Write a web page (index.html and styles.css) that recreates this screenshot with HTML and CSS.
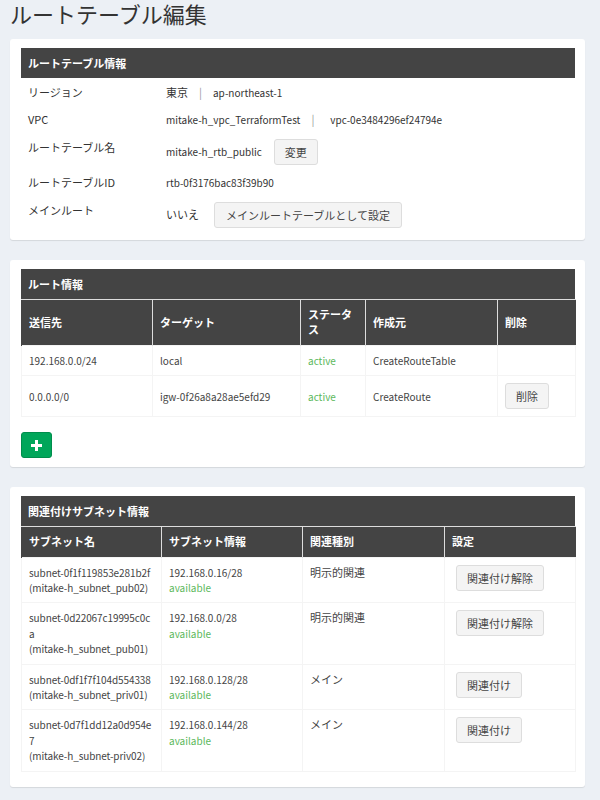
FILE: index.html
```html
<!DOCTYPE html>
<html lang="ja">
<head>
<meta charset="utf-8">
<title>ルートテーブル編集</title>
<link rel="stylesheet" href="styles.css">
</head>
<body>
<div class="page">
  <h1 class="page-title">ルートテーブル編集</h1>

  <section class="box box-info">
    <div class="box-head">ルートテーブル情報</div>
    <div class="info-list">
      <div class="info-row">
        <div class="info-label">リージョン</div>
        <div class="info-value"><span class="ja">東京</span><span class="sep">|</span>ap-northeast-1</div>
      </div>
      <div class="info-row">
        <div class="info-label">VPC</div>
        <div class="info-value">mitake-h_vpc_TerraformTest<span class="sep sep-wide">|</span>vpc-0e3484296ef24794e</div>
      </div>
      <div class="info-row has-btn">
        <div class="info-label">ルートテーブル名</div>
        <div class="info-value">mitake-h_rtb_public<button class="btn btn-gap">変更</button></div>
      </div>
      <div class="info-row">
        <div class="info-label">ルートテーブルID</div>
        <div class="info-value">rtb-0f3176bac83f39b90</div>
      </div>
      <div class="info-row has-btn">
        <div class="info-label">メインルート</div>
        <div class="info-value"><span class="ja">いいえ</span><button class="btn btn-gap-wide">メインルートテーブルとして設定</button></div>
      </div>
    </div>
  </section>

  <section class="box box-route">
    <div class="box-head">ルート情報</div>
    <table class="tbl">
      <thead>
        <tr>
          <th class="c-dest">送信先</th>
          <th class="c-target">ターゲット</th>
          <th class="c-status">ステータス</th>
          <th class="c-origin">作成元</th>
          <th class="c-del">削除</th>
        </tr>
      </thead>
      <tbody>
        <tr>
          <td>192.168.0.0/24</td>
          <td>local</td>
          <td class="ok">active</td>
          <td>CreateRouteTable</td>
          <td></td>
        </tr>
        <tr>
          <td>0.0.0.0/0</td>
          <td>igw-0f26a8a28ae5efd29</td>
          <td class="ok">active</td>
          <td>CreateRoute</td>
          <td><button class="btn">削除</button></td>
        </tr>
      </tbody>
    </table>
    <button class="btn-add" aria-label="追加"><svg width="11" height="11" viewBox="0 0 11 11"><path d="M4 0h3v4h4v3H7v4H4V7H0V4h4z" fill="#fff"/></svg></button>
  </section>

  <section class="box box-subnet">
    <div class="box-head">関連付けサブネット情報</div>
    <table class="tbl tbl-sub">
      <thead>
        <tr>
          <th class="c-sname">サブネット名</th>
          <th class="c-sinfo">サブネット情報</th>
          <th class="c-stype">関連種別</th>
          <th class="c-sset">設定</th>
        </tr>
      </thead>
      <tbody>
        <tr>
          <td class="brk">subnet-0f1f119853e281b2f<br>(mitake-h_subnet_pub02)</td>
          <td>192.168.0.16/28<br><span class="ok">available</span></td>
          <td><span class="ja">明示的関連</span></td>
          <td><button class="btn btn-in">関連付け解除</button></td>
        </tr>
        <tr>
          <td class="brk">subnet-0d22067c19995c0ca<br>(mitake-h_subnet_pub01)</td>
          <td>192.168.0.0/28<br><span class="ok">available</span></td>
          <td><span class="ja">明示的関連</span></td>
          <td><button class="btn btn-in">関連付け解除</button></td>
        </tr>
        <tr>
          <td class="brk">subnet-0df1f7f104d554338<br>(mitake-h_subnet_priv01)</td>
          <td>192.168.0.128/28<br><span class="ok">available</span></td>
          <td><span class="ja">メイン</span></td>
          <td><button class="btn btn-in">関連付け</button></td>
        </tr>
        <tr>
          <td class="brk">subnet-0d7f1dd12a0d954e7<br>(mitake-h_subnet-priv02)</td>
          <td>192.168.0.144/28<br><span class="ok">available</span></td>
          <td><span class="ja">メイン</span></td>
          <td><button class="btn btn-in">関連付け</button></td>
        </tr>
      </tbody>
    </table>
  </section>
</div>
</body>
</html>
```
FILE: styles.css
```css
* { box-sizing: border-box; }
html, body { margin: 0; padding: 0; }
body {
  background: #ecf0f5;
  font-family: "Noto Sans CJK JP", "Noto Sans", sans-serif;
  font-size: 11px;
  line-height: 15.4px;
  color: #333;
}
.page { width: 585px; padding-left: 10px; padding-bottom: 20px; }
.page-title {
  margin: 0;
  padding-top: 1px;
  font-size: 22px;
  font-weight: 400;
  line-height: 25px;
  color: #333;
}
.box {
  background: #fff;
  border-radius: 3px;
  box-shadow: 0 1px 1px rgba(0,0,0,0.1);
  margin-top: 13px;
  padding: 9px 10px 7.5px 11px;
}
.box + .box { margin-top: 20px; }
.box-route { padding-bottom: 9px; }
.box-subnet { padding-bottom: 15px; }
.box-head {
  background: #444;
  color: #fff;
  font-weight: 700;
  line-height: 30px;
  padding-left: 7px;
}
.info-list { padding-top: 1.5px; }
.info-row {
  display: flex;
  align-items: center;
  padding: 5.8px 0 5.8px 7px;
}
.info-row.has-btn { padding: 5px 0; padding-left: 7px; }
.info-label { width: 138px; flex: none; align-self: flex-start; }
.has-btn .info-label { padding-top: 1px; }
.info-value { display: flex; align-items: center; font-size: 10px; }
.ja { font-size: 11px; }
.sep { color: #999; margin: 0 11px; font-size: 11px; }
.sep-wide { margin: 0 16px 0 11px; }
.btn {
  display: inline-block;
  background: #f4f4f4;
  color: #444;
  border: 1px solid #ddd;
  border-radius: 3px;
  padding: 4px 10px;
  line-height: 16px;
  font-family: inherit;
  font-size: 11px;
  cursor: pointer;
}
.btn-gap { margin-left: 12px; }
.btn-gap-wide { margin-left: 15px; padding: 4px 11px; }
.btn-in { margin-left: 4px; }
.tbl {
  width: 100%;
  border-collapse: collapse;
  table-layout: fixed;
}
.tbl th {
  background: #444;
  color: #fff;
  font-weight: 700;
  text-align: left;
  padding: 7px 7px;
  border-top: 1px solid #ddd;
  border-left: 1px solid #ddd;
  vertical-align: middle;
}
.tbl th:first-child { border-left-color: #444; }
.tbl td {
  padding: 7px 7px;
  border: 1px solid #f4f4f4;
  vertical-align: middle;
  color: #444;
  font-size: 10px;
}
.tbl-sub td { vertical-align: top; }
.tbl-sub td.brk { padding-left: 7px; padding-right: 6px; letter-spacing: -0.1px; }
.brk { word-break: break-all; }
.ok { color: #5cb85c; }
.tbl td.ok { color: #5cb85c; }
.c-dest { width: 131px; }
.c-target { width: 148px; }
.c-status { width: 65px; }
.c-origin { width: 132px; }
.c-del { width: 78px; }
.c-sname { width: 140px; }
.c-sinfo { width: 141px; }
.c-stype { width: 142px; }
.c-sset { width: 131px; }
.btn-add {
  display: flex;
  align-items: center;
  justify-content: center;
  width: 31px;
  height: 26px;
  margin-top: 15px;
  padding: 0;
  background: #00a65a;
  border: 1px solid #008d4c;
  border-radius: 3px;
  cursor: pointer;
}
```
